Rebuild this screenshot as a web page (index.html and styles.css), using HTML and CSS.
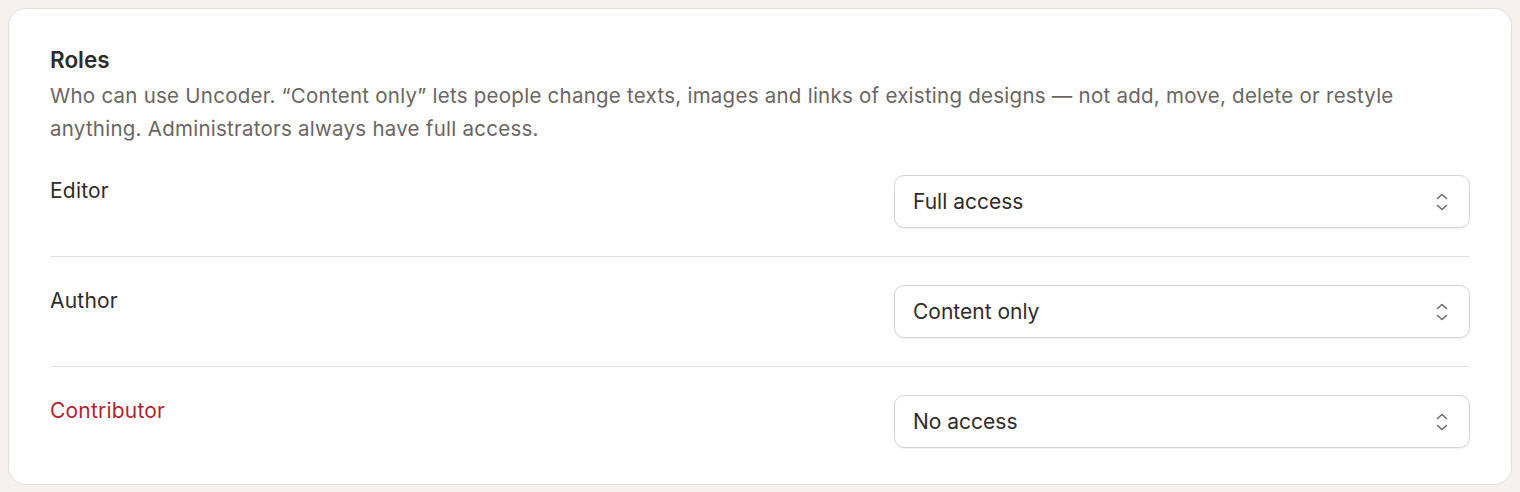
FILE: index.html
```html
<!DOCTYPE html>
<html>
<head>
<meta charset="utf-8">
<link rel="stylesheet" href="styles.css">
</head>
<body>
<section class="card">
  <header class="card-head">
    <h2 class="title">Roles</h2>
    <p class="desc">Who can use Uncoder. “Content only” lets people change texts, images and links of existing designs — not add, move, delete or restyle anything. Administrators always have full access.</p>
  </header>
  <div class="row">
    <span class="label">Editor</span>
    <div class="select"><span>Full access</span>
      <svg class="chev" width="12" height="20" viewBox="0 0 12 20"><path d="M1.5 6.5 6 2.5l4.5 4M1.5 13.5 6 17.5l4.5-4" fill="none" stroke="#6a6562" stroke-width="1.5" stroke-linecap="round" stroke-linejoin="round"/></svg>
    </div>
  </div>
  <div class="row">
    <span class="label">Author</span>
    <div class="select"><span>Content only</span>
      <svg class="chev" width="12" height="20" viewBox="0 0 12 20"><path d="M1.5 6.5 6 2.5l4.5 4M1.5 13.5 6 17.5l4.5-4" fill="none" stroke="#6a6562" stroke-width="1.5" stroke-linecap="round" stroke-linejoin="round"/></svg>
    </div>
  </div>
  <div class="row">
    <span class="label label-danger">Contributor</span>
    <div class="select"><span>No access</span>
      <svg class="chev" width="12" height="20" viewBox="0 0 12 20"><path d="M1.5 6.5 6 2.5l4.5 4M1.5 13.5 6 17.5l4.5-4" fill="none" stroke="#6a6562" stroke-width="1.5" stroke-linecap="round" stroke-linejoin="round"/></svg>
    </div>
  </div>
</section>
</body>
</html>
```

FILE: styles.css
```css
html, body {
  margin: 0;
  padding: 0;
  background: #f4f1ee;
}
body {
  padding: 8px;
  font-family: Inter, "Noto Sans", sans-serif;
  color: #2f2b29;
}
.card {
  background: #fff;
  border: 1px solid #e3dfdb;
  border-radius: 18px;
  padding: 36px 41px 7px 41px;
  box-sizing: border-box;
  height: 477px;
}
.title {
  margin: 0;
  font-size: 22.5px;
  line-height: 30px;
  font-weight: 600;
  color: #2f2b29;
}
.desc {
  margin: 4px 0 0;
  font-size: 20.5px;
  line-height: 33px;
  letter-spacing: 0.25px;
  color: #6b6562;
}
.row {
  display: flex;
  justify-content: space-between;
  align-items: flex-start;
  padding: 28px 0;
  border-bottom: 1px solid #e4e0dd;
}
.row:first-of-type {
  padding-top: 30px;
}
.row:last-child {
  border-bottom: none;
}
.label {
  font-size: 21px;
  line-height: 30px;
  padding-top: 1px;
  letter-spacing: 0.2px;
  color: #2f2b29;
}
.label-danger {
  color: #b51f2e;
}
.select {
  width: 576px;
  height: 53px;
  box-sizing: border-box;
  border: 1px solid #d8d3d0;
  border-radius: 10px;
  box-shadow: 0 1px 2px rgba(0,0,0,0.06);
  display: flex;
  align-items: center;
  justify-content: space-between;
  padding: 0 21px 0 18px;
  font-size: 21px;
  color: #2f2b29;
}
.chev {
  display: block;
}
```
